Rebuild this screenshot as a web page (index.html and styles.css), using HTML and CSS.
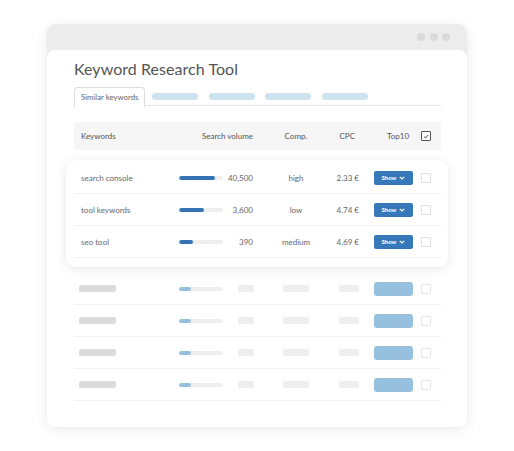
FILE: index.html
```html
<!DOCTYPE html>
<html lang="en">
<head>
<meta charset="utf-8">
<title>Keyword Research Tool</title>
<link rel="stylesheet" href="styles.css">
</head>
<body>
<div class="stage">
  <div class="window">
    <div class="titlebar">
      <span class="dot"></span><span class="dot"></span><span class="dot"></span>
    </div>
    <div class="panel">
      <h1 class="title">Keyword Research Tool</h1>
      <div class="tabs">
        <div class="tab">Similar keywords</div>
        <span class="tab-ph first"></span>
        <span class="tab-ph"></span>
        <span class="tab-ph"></span>
        <span class="tab-ph"></span>
      </div>

      <div class="grid head">
        <div class="c-kw">Keywords</div>
        <div class="c-vol-head">Search volume</div>
        <div class="c-comp">Comp.</div>
        <div class="c-cpc-head">CPC</div>
        <div class="c-top-head">Top10</div>
        <div class="c-chk"><span class="box checked"><svg viewBox="0 0 9 9" width="9" height="9"><path d="M2.3 4.6 L3.9 6.1 L6.8 2.9" fill="none" stroke="#444" stroke-width="1.1"/></svg></span></div>
      </div>

      <div class="card">
        <div class="grid row">
          <div class="c-kw">search console</div>
          <div class="c-bar"><span class="track"><span class="fill" style="width:82%"></span></span></div>
          <div class="c-vol">40,500</div>
          <div class="c-comp">high</div>
          <div class="c-cpc">2.33 €</div>
          <div class="c-top"><span class="btn">Show <svg viewBox="0 0 6 4" width="6" height="4"><path d="M0.8 0.8 L3 3 L5.2 0.8" fill="none" stroke="#fff" stroke-width="1.1"/></svg></span></div>
          <div class="c-chk"><span class="box"></span></div>
        </div>
        <div class="grid row">
          <div class="c-kw">tool keywords</div>
          <div class="c-bar"><span class="track"><span class="fill" style="width:57%"></span></span></div>
          <div class="c-vol">3,600</div>
          <div class="c-comp">low</div>
          <div class="c-cpc">4.74 €</div>
          <div class="c-top"><span class="btn">Show <svg viewBox="0 0 6 4" width="6" height="4"><path d="M0.8 0.8 L3 3 L5.2 0.8" fill="none" stroke="#fff" stroke-width="1.1"/></svg></span></div>
          <div class="c-chk"><span class="box"></span></div>
        </div>
        <div class="grid row">
          <div class="c-kw">seo tool</div>
          <div class="c-bar"><span class="track"><span class="fill" style="width:32%"></span></span></div>
          <div class="c-vol">390</div>
          <div class="c-comp">medium</div>
          <div class="c-cpc">4.69 €</div>
          <div class="c-top"><span class="btn">Show <svg viewBox="0 0 6 4" width="6" height="4"><path d="M0.8 0.8 L3 3 L5.2 0.8" fill="none" stroke="#fff" stroke-width="1.1"/></svg></span></div>
          <div class="c-chk"><span class="box"></span></div>
        </div>
      </div>

      <div class="placeholders">
        <div class="grid prow">
          <div class="c-kw"><span class="ph-kw"></span></div>
          <div class="c-bar"><span class="track"><span class="fill light"></span></span></div>
          <div class="c-vol"><span class="ph ph-vol"></span></div>
          <div class="c-comp"><span class="ph ph-comp"></span></div>
          <div class="c-cpc"><span class="ph ph-cpc"></span></div>
          <div class="c-top"><span class="btn-ph"></span></div>
          <div class="c-chk"><span class="box light"></span></div>
        </div>
        <div class="grid prow">
          <div class="c-kw"><span class="ph-kw"></span></div>
          <div class="c-bar"><span class="track"><span class="fill light"></span></span></div>
          <div class="c-vol"><span class="ph ph-vol"></span></div>
          <div class="c-comp"><span class="ph ph-comp"></span></div>
          <div class="c-cpc"><span class="ph ph-cpc"></span></div>
          <div class="c-top"><span class="btn-ph"></span></div>
          <div class="c-chk"><span class="box light"></span></div>
        </div>
        <div class="grid prow">
          <div class="c-kw"><span class="ph-kw"></span></div>
          <div class="c-bar"><span class="track"><span class="fill light"></span></span></div>
          <div class="c-vol"><span class="ph ph-vol"></span></div>
          <div class="c-comp"><span class="ph ph-comp"></span></div>
          <div class="c-cpc"><span class="ph ph-cpc"></span></div>
          <div class="c-top"><span class="btn-ph"></span></div>
          <div class="c-chk"><span class="box light"></span></div>
        </div>
        <div class="grid prow">
          <div class="c-kw"><span class="ph-kw"></span></div>
          <div class="c-bar"><span class="track"><span class="fill light"></span></span></div>
          <div class="c-vol"><span class="ph ph-vol"></span></div>
          <div class="c-comp"><span class="ph ph-comp"></span></div>
          <div class="c-cpc"><span class="ph ph-cpc"></span></div>
          <div class="c-top"><span class="btn-ph"></span></div>
          <div class="c-chk"><span class="box light"></span></div>
        </div>
      </div>
    </div>
  </div>
</div>
</body>
</html>
```
FILE: styles.css
```css
* { box-sizing: border-box; }
html, body { margin: 0; padding: 0; background: #fff; }
body {
  font-family: "Lato", "Liberation Sans", sans-serif;
  color: #666;
  width: 514px;
  height: 451px;
  overflow: hidden;
}
.stage { padding: 24px 0 0 47px; }
.window {
  width: 420px;
  height: 403px;
  background: #ececec;
  border-radius: 9px;
  box-shadow: 0 3px 14px rgba(0,0,0,0.08), 0 0 3px rgba(0,0,0,0.04);
  display: flex;
  flex-direction: column;
}
.titlebar {
  height: 26px;
  display: flex;
  align-items: center;
  justify-content: flex-end;
  gap: 4.5px;
  padding-right: 17px;
}
.dot { width: 8px; height: 8px; border-radius: 50%; background: #dadada; }
.panel {
  flex: 1;
  background: #fff;
  border-radius: 8px;
  padding: 9px 26px 0 27px;
}
.title {
  margin: 0;
  font-size: 16px;
  line-height: 20px;
  font-weight: 400;
  color: #555;
  letter-spacing: 0.05px;
}
.tabs {
  margin-top: 8px;
  height: 19px;
  display: flex;
  align-items: center;
  border-bottom: 1px solid #e6e6e6;
}
.tab {
  align-self: stretch;
  width: 71px;
  height: 20px;
  border: 1px solid #dcdcdc;
  border-bottom: none;
  border-radius: 4px 4px 0 0;
  background: #fff;
  font-size: 7.8px;
  line-height: 18px;
  padding-left: 6px;
  color: #666;
  white-space: nowrap;
}
.tab-ph {
  width: 46px;
  height: 7px;
  border-radius: 4px;
  background: #cde3ef;
  margin-left: 10.5px;
}
.tab-ph.first { margin-left: 7px; }

.grid {
  display: grid;
  grid-template-columns: 105px 44px 30px 86px 26px 56px 1fr;
  align-items: center;
}
.head {
  margin-top: 16px;
  height: 28px;
  background: #f6f6f6;
  border-radius: 2px;
  font-size: 8px;
  color: #555;
}
.c-kw { padding-left: 7px; white-space: nowrap; }
.c-vol-head { grid-column: 2 / 4; text-align: right; white-space: nowrap; }
.c-comp { text-align: center; white-space: nowrap; }
.c-cpc-head { text-align: right; padding-right: 10px; white-space: nowrap; }
.c-top-head { padding-left: 22px; white-space: nowrap; }
.c-chk { display: flex; }

.box {
  width: 10px;
  height: 10px;
  border: 1px solid #dedede;
  border-radius: 1px;
  background: #fff;
  display: flex;
  align-items: center;
  justify-content: center;
}
.box.checked { border-color: #555; }
.box.checked svg { display: block; }
.box.light { border-color: #e6e6e6; }

.card {
  margin: 10px -7px 0 -8px;
  padding: 2px 7px 9px 8px;
  background: #fff;
  border-radius: 10px;
  box-shadow: 0 2px 12px rgba(0,0,0,0.09), 0 0 2px rgba(0,0,0,0.03);
}
.row {
  height: 32px;
  border-bottom: 1px solid #f1f1f1;
  font-size: 8px;
  color: #666;
}
.c-bar { display: flex; }
.track {
  width: 44px;
  height: 4px;
  border-radius: 2px;
  background: #eeeeee;
  overflow: hidden;
  display: flex;
}
.fill { height: 4px; border-radius: 2px; background: #3574b4; }
.fill.light { width: 12px; background: #94bfdd; }
.c-vol { white-space: nowrap; display: flex; justify-content: flex-end; }
.c-cpc { padding-right: 6px; white-space: nowrap; display: flex; justify-content: flex-end; }
.c-top { padding-left: 9px; display: flex; }
.btn {
  width: 39px;
  height: 14px;
  border-radius: 2px;
  background: #3778ba;
  color: #fff;
  font-size: 6px;
  font-weight: 700;
  display: flex;
  align-items: center;
  justify-content: center;
  gap: 3px;
}
.btn svg { display: block; }

.placeholders { margin-top: 6px; }
.prow { height: 32px; border-bottom: 1px solid #f3f3f3; }
.ph-kw {
  display: block;
  width: 37px;
  height: 7px;
  margin-left: -2px;
  border-radius: 2px;
  background: #dcdcdc;
}
.ph { display: block; height: 7px; border-radius: 2px; background: #eeeeee; }
.ph-vol { width: 16px; margin-right: -1px; }
.ph-comp { width: 26px; margin: 0 auto; }
.ph-cpc { width: 23px; }
.btn-ph {
  width: 39px;
  height: 14px;
  border-radius: 3px;
  background: #96c0dd;
}
```
